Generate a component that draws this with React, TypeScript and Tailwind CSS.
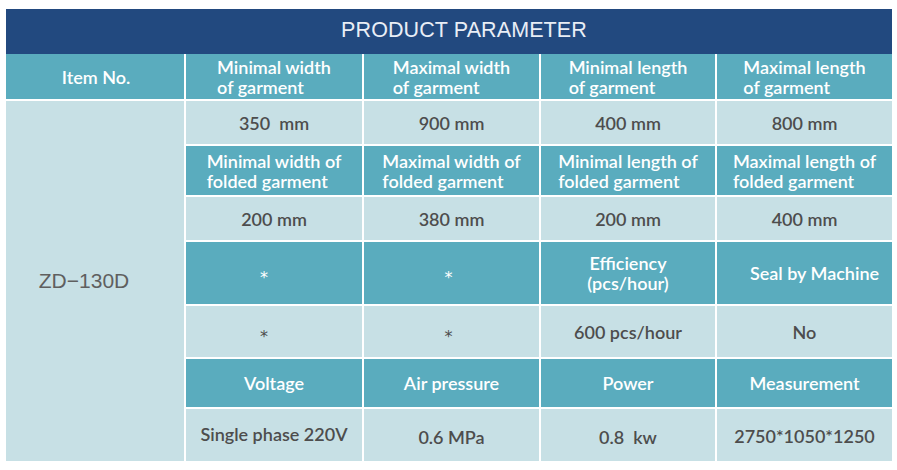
import React from "react";

const hd = "bg-[#5aacbe] text-white";
const lt = "bg-[#c7e0e5] text-[#4d4d4d]";

function Cell({
  tone,
  children,
  center,
  className = "",
}: {
  tone: "h" | "l";
  children: React.ReactNode;
  center?: boolean;
  className?: string;
}) {
  return (
    <div
      className={`${tone === "h" ? hd : lt} flex items-center justify-center ${className}`}
    >
      <div className={center ? "text-center" : "text-left"}>{children}</div>
    </div>
  );
}

function Star() {
  return (
    <span className="font-['DejaVu_Sans',sans-serif] text-[16px] font-normal leading-none relative top-[3px]">
      *
    </span>
  );
}

export default function App() {
  return (
    <div className="w-[897px] h-[470px] bg-white pt-[9px] pl-[6px]">
      <div className="w-[886px] flex flex-col">
        <div className="h-[45px] bg-[#22497f] flex items-center justify-center text-[#e9eef6] text-[21.5px] pl-[30px] pb-[2px] font-['Liberation_Sans',Arial,sans-serif] tracking-[0.1px]">
          PRODUCT PARAMETER
        </div>
        <div className="grid grid-cols-[178px_176px_175px_174px_175px] grid-rows-[45px_43px_49px_43px_62px_51px_48px_52px] gap-[2px] bg-white font-['Lato',sans-serif] font-semibold text-[18px] leading-[20px]">
          <Cell tone="h" center className="pl-[2px]">Item No.</Cell>
          <Cell tone="h">Minimal width<br />of garment</Cell>
          <Cell tone="h">Maximal width<br />of garment</Cell>
          <Cell tone="h">Minimal length<br />of garment</Cell>
          <Cell tone="h">Maximal length<br />of garment</Cell>

          <div className={`${lt} row-span-7 flex items-center justify-center pr-[22px]`}>
            <span className="font-['Liberation_Sans',Arial,sans-serif] font-normal text-[21px] text-[#5f5f5f]">
              ZD−130D
            </span>
          </div>
          <Cell tone="l">350&nbsp; mm</Cell>
          <Cell tone="l">900 mm</Cell>
          <Cell tone="l">400 mm</Cell>
          <Cell tone="l">800 mm</Cell>

          <Cell tone="h">Minimal width of<br />folded garment</Cell>
          <Cell tone="h">Maximal width of<br />folded garment</Cell>
          <Cell tone="h">Minimal length of<br />folded garment</Cell>
          <Cell tone="h">Maximal length of<br />folded garment</Cell>

          <Cell tone="l">200 mm</Cell>
          <Cell tone="l">380 mm</Cell>
          <Cell tone="l">200 mm</Cell>
          <Cell tone="l">400 mm</Cell>

          <Cell tone="h" className="pr-[20px]"><Star /></Cell>
          <Cell tone="h" className="pr-[6px]"><Star /></Cell>
          <Cell tone="h" center>Efficiency<br />(pcs/hour)</Cell>
          <Cell tone="h" className="pl-[20px]">Seal by Machine</Cell>

          <Cell tone="l" className="pr-[20px]"><Star /></Cell>
          <Cell tone="l" className="pr-[6px]"><Star /></Cell>
          <Cell tone="l">600 pcs/hour</Cell>
          <Cell tone="l">No</Cell>

          <Cell tone="h">Voltage</Cell>
          <Cell tone="h">Air pressure</Cell>
          <Cell tone="h">Power</Cell>
          <Cell tone="h">Measurement</Cell>

          <Cell tone="l" className="pb-[3px]">Single phase 220V</Cell>
          <Cell tone="l" className="pt-[4px]">0.6 MPa</Cell>
          <Cell tone="l" className="pt-[4px]">0.8&nbsp; kw</Cell>
          <Cell tone="l" className="pt-[2px]">2750*1050*1250</Cell>
        </div>
      </div>
    </div>
  );
}
